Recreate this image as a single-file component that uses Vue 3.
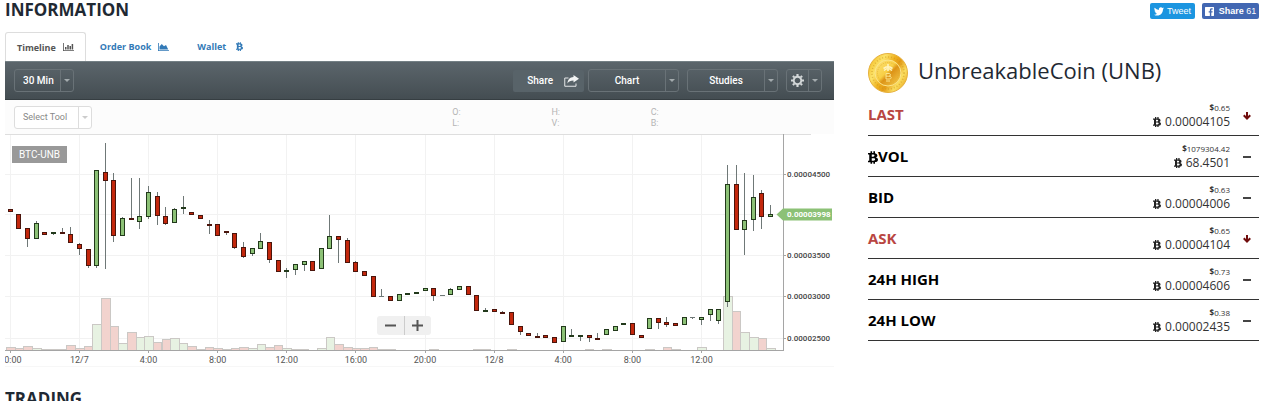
<script setup>
// [colour, high, body top, body bottom, low]; 'f' is a flat period
const candles = [
  ['r', 209, 209, 212, 212], ['r', 214, 214, 229, 229], ['r', 228, 228, 239, 247], ['g', 221, 223, 239, 239],
  ['r', 232, 232, 235, 235], ['g', 232, 232, 234, 235], ['r', 228, 232, 234, 234], ['r', 227, 234, 243, 243],
  ['r', 243, 244, 249, 255], ['r', 249, 249, 266, 268], ['g', 170, 170, 266, 268], ['r', 143, 172, 181, 269],
  ['r', 173, 180, 236, 242], ['g', 217, 218, 236, 236], ['r', 178, 218, 220, 220], ['g', 178, 216, 222, 229],
  ['g', 186, 192, 217, 219], ['r', 192, 196, 216, 225], ['r', 207, 216, 224, 225], ['g', 208, 209, 223, 223],
  ['g', 196, 207, 209, 214], ['r', 212, 212, 215, 215], ['r', 215, 215, 219, 219], ['r', 220, 224, 226, 234],
  ['r', 224, 224, 236, 236], ['r', 231, 231, 233, 235], ['r', 233, 233, 248, 249], ['r', 242, 247, 257, 258],
  ['g', 248, 248, 254, 256], ['g', 233, 241, 249, 249], ['r', 242, 242, 260, 263], ['r', 260, 260, 272, 272],
  ['g', 268, 270, 272, 278], ['g', 264, 264, 270, 275], ['g', 261, 261, 265, 271], ['r', 261, 261, 271, 271],
  ['g', 248, 248, 269, 269], ['g', 215, 236, 249, 249], ['r', 236, 236, 240, 263], ['r', 238, 240, 263, 263],
  ['r', 261, 262, 272, 272], ['r', 271, 271, 276, 276], ['r', 276, 276, 297, 297], ['f', 289, 296, 297, 297],
  ['r', 296, 296, 301, 301], ['g', 294, 294, 301, 301], ['g', 293, 293, 295, 295], ['g', 292, 292, 294, 294],
  ['g', 288, 288, 291, 291], ['r', 288, 288, 296, 301], ['f', 295, 295, 295, 295], ['g', 288, 289, 295, 295],
  ['g', 286, 286, 290, 290], ['r', 286, 286, 295, 295], ['r', 295, 295, 311, 311], ['g', 308, 310, 312, 312],
  ['r', 309, 309, 312, 312], ['r', 311, 312, 314, 314], ['r', 312, 312, 325, 325], ['r', 326, 326, 332, 335],
  ['r', 333, 333, 336, 336], ['r', 333, 336, 338, 338], ['r', 335, 335, 338, 338], ['r', 337, 337, 343, 343],
  ['g', 326, 326, 342, 342], ['g', 329, 335, 337, 337], ['g', 335, 335, 337, 341], ['r', 335, 335, 338, 342],
  ['r', 333, 338, 340, 340], ['g', 329, 329, 335, 335], ['g', 326, 326, 331, 331], ['g', 323, 323, 325, 325],
  ['r', 323, 323, 335, 335], ['r', 335, 335, 338, 338], ['g', 318, 318, 329, 329], ['r', 318, 318, 323, 329],
  ['r', 317, 322, 325, 327], ['r', 323, 323, 326, 326], ['g', 317, 317, 325, 325], ['f', 317, 317, 317, 319],
  ['g', 317, 317, 320, 325], ['g', 309, 309, 315, 321], ['g', 309, 309, 321, 324], ['g', 165, 184, 302, 307],
  ['r', 165, 184, 230, 230], ['g', 173, 220, 230, 255], ['g', 175, 197, 220, 231], ['r', 190, 193, 217, 229],
  ['g', 205, 214, 217, 217],
]
// [period index, colour, height]
const volumes = [
  [0, 'r', 3], [1, 'r', 2], [2, 'r', 4], [3, 'g', 2], [4, 'r', 1], [5, 'g', 1], [6, 'r', 1], [7, 'r', 5], [8, 'r', 2],
  [9, 'r', 4], [10, 'g', 26], [11, 'r', 52], [12, 'r', 24], [13, 'g', 7], [14, 'r', 18], [15, 'g', 13], [16, 'g', 14],
  [17, 'r', 8], [18, 'r', 11], [19, 'g', 12], [20, 'g', 7], [21, 'r', 4], [22, 'r', 1], [23, 'r', 3], [24, 'r', 2],
  [25, 'g', 1], [26, 'r', 2], [27, 'r', 3], [28, 'g', 2], [29, 'g', 6], [30, 'r', 3], [31, 'r', 5], [32, 'g', 2],
  [33, 'g', 1], [34, 'r', 1], [36, 'g', 2], [37, 'g', 13], [38, 'r', 6], [39, 'r', 3], [40, 'r', 2], [41, 'r', 2],
  [42, 'r', 3], [43, 'r', 1], [44, 'r', 1], [49, 'r', 1], [54, 'r', 1], [55, 'g', 1], [58, 'r', 1], [67, 'r', 1],
  [69, 'g', 1], [74, 'g', 1], [76, 'r', 3], [77, 'r', 1], [80, 'g', 3], [83, 'g', 54], [84, 'r', 39], [85, 'g', 18],
  [86, 'g', 13], [87, 'r', 12], [88, 'g', 2],
]
const step = 8.64
const cx = (i) => 10.3 + i * step
const px = (i) => Math.floor(cx(i)) + 0.5
const times = ['20:00', '12/7', '4:00', '8:00', '12:00', '16:00', '20:00', '12/8', '4:00', '8:00', '12:00']
const prices = [[174, '0.00004500'], [214, ''], [255, '0.00003500'], [296, '0.00003000'], [338, '0.00002500']]
const stats = [
  { name: 'LAST', usd: '0.65', btc: '0.00004105', down: true },
  { name: 'VOL', usd: '1079304.42', btc: '68.4501', coin: true },
  { name: 'BID', usd: '0.63', btc: '0.00004006' },
  { name: 'ASK', usd: '0.65', btc: '0.00004104', down: true },
  { name: '24H HIGH', usd: '0.73', btc: '0.00004606' },
  { name: '24H LOW', usd: '0.38', btc: '0.00002435' },
]
const btcPath = 'M0 2.8H4V0H6.6V2.8H8.6V0H11.2V3C14 3.6 15 5.2 15 6.8c0 1.6-1 2.6-2.5 3C14.7 10.3 16 11.6 16 13.4c0 2.5-2 3.6-4.8 3.9V20H8.6V17.4H6.6V20H4V17.4H0V15H2V5.3H0ZM6 5.3V8.8H8.2C11.2 8.8 11.2 5.3 8.2 5.3ZM6 11.2V15H8.8C12.3 15 12.3 11.2 8.8 11.2Z'
</script>

<template>
  <main class="page">
    <header class="top">
      <h2>INFORMATION</h2>
      <div class="social">
        <button class="tweet" type="button">
          <svg viewBox="0 0 24 20" width="10" height="9"><path fill="#fff" d="M24 2.4a10 10 0 0 1-2.8.8A5 5 0 0 0 23.300.5a10 10 0 0 1-3.100 1.200A4.900 4.900 0 0 0 11.800 6.200 14 14 0 0 1 1.700 1a4.900 4.900 0 0 0 1.500 6.600A4.900 4.900 0 0 1 1 7v.1a4.900 4.900 0 0 0 3.900 4.800 5 5 0 0 1-2.200.1 4.900 4.900 0 0 0 4.600 3.400A9.900 9.900 0 0 1 0 17.500 14 14 0 0 0 7.500 19.700c9.100 0 14-7.500 14-14v-.6A10 10 0 0 0 24 2.400Z" /></svg>
          Tweet
        </button>
        <button class="fb" type="button">
          <svg viewBox="0 0 20 20" width="9" height="9"><path fill="#fff" fill-rule="evenodd" d="M1 0H19A1 1 0 0 1 20 1V19A1 1 0 0 1 19 20H14V12.300H16.600L17 9.200H14V7.300C14 6.400 14.200 5.800 15.500 5.800H17.100V3C16.800 3 15.800 2.900 14.700 2.900C12.300 2.900 10.800 4.300 10.800 6.900V9.200H8.200V12.300H10.800V20H1A1 1 0 0 1 0 19V1A1 1 0 0 1 1 0Z" /></svg>
          <span><b>Share</b> 61</span>
        </button>
      </div>
    </header>

    <div class="columns">
      <section class="left">
        <nav class="tabs">
          <a href="#timeline" class="tab active">Timeline
            <svg viewBox="0 0 22 16" width="11" height="8"><path fill="currentColor" d="M0 0H1.600V14.400H22V16H0ZM4 8H7V13H4ZM8.500 4H11.500V13H8.500ZM13 6H16V13H13ZM17.300 2H20.300V13H17.300Z" /></svg>
          </a>
          <a href="#orders" class="tab">Order Book
            <svg viewBox="0 0 22 16" width="11" height="8"><path fill="currentColor" d="M0 0H1.600V14.400H22V16H0ZM3 13V7L7.500 2L12 6.500L16 4L20.500 13Z" /></svg>
          </a>
          <a href="#wallet" class="tab wallet">Wallet
            <svg viewBox="0 0 16 20" width="7" height="9"><path fill="currentColor" fill-rule="evenodd" :d="btcPath" /></svg>
          </a>
        </nav>

        <div class="toolbar">
          <div class="pick dark period">
            <select aria-label="Period"><option>30 Min</option></select><i class="caret"></i>
          </div>
          <div class="actions">
            <button class="share" type="button">Share
              <svg viewBox="0 0 30 24" width="15" height="12"><path fill="none" stroke="#e4e7e8" stroke-width="2" d="M9 6H1.500V22.500H24V17" /><path fill="#f2f4f4" d="M19 0L30 7.500L19 15V11C13 11 9.500 12.500 7 17C7.500 9 12 4.500 19 4Z" /></svg>
            </button>
            <button class="menu wide" type="button"><span>Chart</span><i class="caret"></i></button>
            <button class="menu wide" type="button"><span>Studies</span><i class="caret"></i></button>
            <button class="menu gear" type="button" aria-label="Settings">
              <span><svg viewBox="-12 -12 24 24" width="13" height="13"><circle r="7" fill="none" stroke="#d3d7d8" stroke-width="3.600" /><path stroke="#d3d7d8" stroke-width="4" d="M0-12V-8M0 12V8M-12 0H-8M12 0H8M-8.500-8.500L-6-6M8.500 8.500L6 6M-8.500 8.500L-6 6M8.500-8.500L6-6" /></svg></span><i class="caret"></i>
            </button>
          </div>
        </div>

        <div class="subbar">
          <div class="pick light tool">
            <select aria-label="Drawing tool"><option>Select Tool</option></select><i class="caret"></i>
          </div>
          <div class="ohlc">
            <span>O:</span><span>H:</span><span>C:</span>
            <span>L:</span><span>V:</span><span>B:</span>
          </div>
        </div>

        <div class="chart">
          <svg class="plot" viewBox="5 134 829 235" shape-rendering="crispEdges">
            <g stroke="#f2f2f2">
              <line v-for="p in prices" :key="p[0]" x1="5" x2="783" :y1="p[0] + 0.5" :y2="p[0] + 0.5" />
              <line v-for="(t, i) in times" :key="i" :x1="px(i * 8)" :x2="px(i * 8)" y1="135" y2="351" />
            </g>
            <line x1="5" x2="811" y1="134.500" y2="134.500" stroke="#dedede" />
            <g v-for="v in volumes" :key="'v' + v[0]">
              <rect :x="Math.round(cx(v[0]) - 4.3) + 0.5" :y="350.5 - v[2]" :width="Math.round(cx(v[0]) + 4.3) - Math.round(cx(v[0]) - 4.3)" :height="v[2]" :fill="v[1] === 'r' ? '#f2d3ce' : '#e7f2e2'" stroke="#cbc8c5" />
            </g>
            <g v-for="(c, i) in candles" :key="i">
              <line :x1="px(i)" :x2="px(i)" :y1="c[1]" :y2="c[4]" stroke="#6f7877" />
              <rect v-if="c[0] !== 'f'" :x="px(i) - 2" :y="c[2] + 0.5" width="4" :height="Math.max(c[3] - c[2] - 1, 1)" :fill="c[0] === 'r' ? '#c3270c' : '#8cc176'" :stroke="c[0] === 'r' ? '#4a150c' : '#22391b'" />
              <line v-else :x1="px(i) - 2.5" :x2="px(i) + 2.5" :y1="c[2] + 0.5" :y2="c[2] + 0.5" stroke="#6f7877" />
            </g>
            <path d="M5 350.500H783.500M783.500 134V350.500" fill="none" stroke="#a5a5a5" />
            <path v-for="(t, i) in times" :key="'t' + i" :d="`M${px(i * 8)} 350V353`" stroke="#a5a5a5" />
            <g class="time">
              <text v-for="(t, i) in times" :key="i" :x="cx(i * 8)" y="363">{{ t }}</text>
            </g>
            <g class="price">
              <template v-for="p in prices" :key="p[0]">
                <path v-if="p[1]" :d="`M784 ${p[0] + 0.5}H786`" stroke="#a5a5a5" />
                <text x="787" :y="p[0] + 3">{{ p[1] }}</text>
              </template>
              <path d="M776.500 214.500L783 208.500H832V220.500H783Z" fill="#8cc176" shape-rendering="auto" />
              <text class="now" x="787" y="217">0.00003998</text>
            </g>
            <path d="M5 366.500H834" stroke="#f7f7f7" />
          </svg>
          <span class="pair">BTC-UNB</span>
          <div class="zoomer">
            <button type="button" aria-label="Zoom out"><svg width="11" height="11"><path d="M0 5.500H11" /></svg></button>
            <button type="button" aria-label="Zoom in"><svg width="11" height="11"><path d="M0 5.500H11M5.500 0V11" /></svg></button>
          </div>
        </div>
      </section>

      <aside class="right">
        <div class="coin">
          <svg viewBox="0 0 40 40" width="40" height="40">
            <defs>
              <linearGradient id="gold" x1="0" y1="0.200" x2="1" y2="0.800">
                <stop offset="0" stop-color="#f4bd25" /><stop offset="0.250" stop-color="#fce46b" />
                <stop offset="0.450" stop-color="#efb220" /><stop offset="0.600" stop-color="#e39a16" />
                <stop offset="0.800" stop-color="#fbdf60" /><stop offset="1" stop-color="#e9a51d" />
              </linearGradient>
              <linearGradient id="disc" x1="0" y1="0" x2="1" y2="1">
                <stop offset="0" stop-color="#fbe27a" /><stop offset="0.450" stop-color="#f8cf45" />
                <stop offset="0.550" stop-color="#dc9216" /><stop offset="1" stop-color="#f9d452" />
              </linearGradient>
            </defs>
            <circle cx="20" cy="20" r="19.500" fill="url(#gold)" stroke="#e6b03d" />
            <circle cx="20" cy="20" r="16" fill="none" stroke="#c98f1b" stroke-width="1.500" stroke-dasharray="1 2" opacity="0.500" />
            <circle cx="20" cy="20" r="13" fill="url(#disc)" stroke="#fbe58c" />
            <circle cx="20" cy="20" r="10.500" fill="none" stroke="#e0a62c" stroke-dasharray="1 1" opacity="0.600" />
            <path d="M15.500 15.500L18 14H22L24.500 15.500M20 11V18M16 17.500L19 15.500M24 17.500L21 15.500" stroke="#fff4c2" stroke-width="1.500" fill="none" />
            <path d="M18 20.500V26H21C24 26 24 23.200 21 23.200H18M18 20.500H21C23 20.500 23 23.200 21 23.200M19 27V29M21 27V29" stroke="#fbe58c" fill="none" />
          </svg>
          <h1>UnbreakableCoin (UNB)</h1>
        </div>
        <table class="stats">
          <tbody>
            <tr v-for="s in stats" :key="s.name">
              <th scope="row" :class="{ down: s.down }"><svg v-if="s.coin" viewBox="0 0 16 20" width="10" height="13"><path fill="currentColor" fill-rule="evenodd" :d="btcPath" /></svg>{{ s.name }}</th>
              <td class="val">
                <div class="usd"><b>$</b>{{ s.usd }}</div>
                <div class="btc"><svg viewBox="0 0 16 20" width="8" height="10"><path fill="#222" fill-rule="evenodd" :d="btcPath" /></svg> {{ s.btc }}</div>
              </td>
              <td class="trend">
                <svg v-if="s.down" viewBox="0 0 16 16" width="8" height="8"><path d="M8 0V14M1.500 6.500L8 13L14.500 6.500" fill="none" stroke="#700c0c" stroke-width="4" /></svg>
                <svg v-else viewBox="0 0 8 8" width="8" height="8"><path d="M0 4H8" stroke="#444" stroke-width="2" /></svg>
              </td>
            </tr>
          </tbody>
        </table>
      </aside>
    </div>

    <h2 class="next">TRADING</h2>
  </main>
</template>

<style>
body { background: #fff; overflow: hidden; }
</style>

<style scoped>
.page { padding: 0 21px 0 5px; font-family: "Open Sans", "Noto Sans", sans-serif; color: #1f2933; }
button { font: inherit; border: 0; padding: 0; margin: 0; background: none; cursor: pointer; }
svg { display: block; }
h1, h2 { margin: 0; }
h2 { font-size: 17px; line-height: 20px; font-weight: 700; }
.top { display: flex; justify-content: space-between; height: 32px; }
.social { display: flex; gap: 7px; padding-top: 3px; align-items: flex-start; }
.social button { display: flex; align-items: center; justify-content: center; gap: 3px; height: 16px; border-radius: 2px; color: #fff; font: 9px/16px "Liberation Sans", Arial, sans-serif; }
.tweet { width: 45px; background: #1b95e0; }
.social .fb { width: 57px; gap: 5px; background: #4267b2; }
.columns { display: grid; grid-template-columns: 829fr 391fr; gap: 34px; }
.left { min-width: 0; }

.tabs { display: flex; height: 29px; }
.tab { display: flex; align-items: center; gap: 7px; padding: 0 14px; color: #337ab7; font-size: 9px; font-weight: 700; text-decoration: none; white-space: nowrap; }
.tab.active { padding: 0 11px; border: 1px solid #ddd; border-bottom: 0; border-radius: 3px 3px 0 0; color: #555; }
.wallet { gap: 10px; }

.toolbar { display: flex; align-items: center; justify-content: space-between; height: 39px; box-sizing: border-box; padding: 0 12px 0 9px; background: linear-gradient(#5b656b, #444d52); border-top: 1px solid #748085; border-bottom: 1px solid #363e42; font-family: Roboto, "Liberation Sans", sans-serif; }
.pick { position: relative; height: 23px; box-sizing: border-box; border: 1px solid; border-radius: 3px; }
.pick select { appearance: none; width: 100%; height: 21px; margin: 0; padding: 0 0 0 8px; border: 0; background: none; color: inherit; font: inherit; }
.pick .caret { position: absolute; top: 0; right: 0; bottom: 0; pointer-events: none; }
.period { width: 60px; }
.tool { width: 78px; }
.dark { border-color: #697277; color: #fff; font: 500 10px Roboto, sans-serif; }
.light { border-color: #ddd; background: #fff; color: #888; font: 9px Roboto, sans-serif; }
.caret { width: 12px; display: flex; align-items: center; justify-content: center; border-left: 1px solid #697277; color: #a4abae; }
.light .caret { border-color: #ddd; color: #ccc; }
.caret::after { content: ""; border: 3px solid transparent; border-top-color: currentColor; border-bottom: 0; }
.actions { display: flex; align-items: center; gap: 8px; }
.actions button { height: 23px; box-sizing: border-box; color: #fff; font-size: 10px; font-weight: 500; }
.actions .share { display: flex; align-items: center; gap: 11px; height: 22px; padding: 0 5px 0 14px; margin-right: -4px; border-radius: 2px; background: #586369; }
.actions .menu { display: flex; border: 1px solid #697277; border-radius: 3px; }
.menu span { flex: 1; align-self: center; display: flex; justify-content: center; }
.menu .caret { align-self: stretch; }
.wide { width: 91px; }
.gear { width: 36px; }

.subbar { display: grid; grid-template-columns: 443fr 386fr; align-items: center; height: 34px; box-sizing: border-box; padding-left: 9px; background: #fcfcfc; }
.ohlc { display: grid; grid-template-columns: repeat(3, 26%); row-gap: 1px; color: #b5b5b5; font: 9px/10px Roboto, sans-serif; }

.chart { position: relative; }
.plot { width: 100%; height: auto; }
.time { font: 9px Roboto, sans-serif; fill: #555; text-anchor: middle; }
.price { font: 500 8px Roboto, sans-serif; fill: #444; }
.now { fill: #fff; font-weight: 700; }
.pair { position: absolute; left: 7px; top: 12px; width: 55px; background: #999; color: #fff; font: 10px/17px Roboto, sans-serif; text-align: center; }
.zoomer { position: absolute; left: 372px; top: 182px; display: flex; width: 54px; height: 19px; border-radius: 3px; background: #f0f0f0; }
.zoomer button { flex: 1; display: flex; align-items: center; justify-content: center; }
.zoomer button + button { border-left: 1px solid #ccc; }
.zoomer path { stroke: #555; stroke-width: 2; }

.coin { display: flex; gap: 10px; padding-top: 21px; height: 41px; }
h1 { font-size: 22px; line-height: 34px; font-weight: 500; white-space: nowrap; }
.stats { width: 100%; border-collapse: collapse; }
.stats tr { height: 41px; border-bottom: 1px solid #333; }
.stats th, .stats td { padding: 0; vertical-align: middle; }
.stats th { text-align: left; font-size: 15px; line-height: 20px; font-weight: 700; color: #000; white-space: nowrap; }
.stats th svg { display: inline-block; vertical-align: -2px; }
.stats th.down { color: #b94642; }
.val { text-align: right; color: #333; }
.usd { font-size: 8px; line-height: 10px; padding-top: 5px; }
.btc { font-size: 12px; line-height: 18px; }
.btc svg { display: inline-block; vertical-align: -1px; margin-right: 1px; }
.stats .trend { padding: 3px 8px 0 0; width: 21px; }
.trend svg { margin-left: auto; }
.next { margin-top: 20px; }
</style>
